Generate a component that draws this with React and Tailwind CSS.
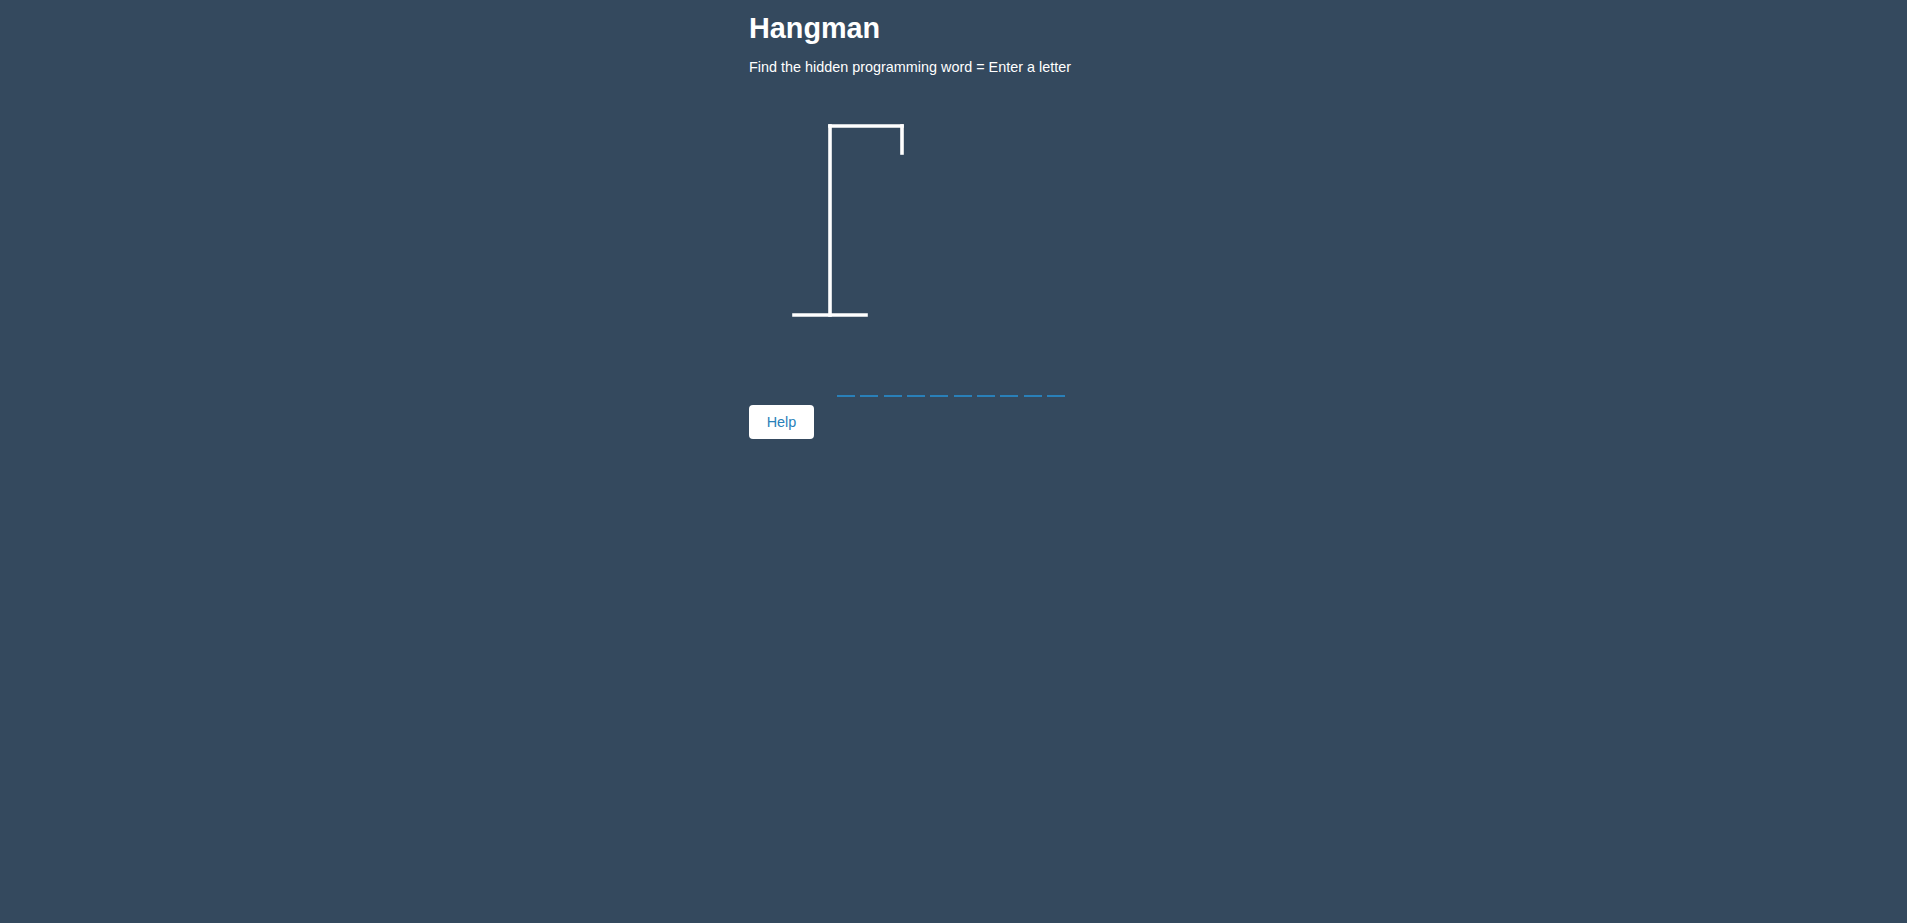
import React from "react";

const word = "javascript";

const App = () => {
  return (
    <div className="min-h-screen w-full overflow-hidden bg-[#34495e] text-white font-['Liberation_Sans',Arial,sans-serif]">
      <div className="flex justify-center">
        <div className="w-[409px] flex flex-col items-start">
          <h1 className="mt-[12px] text-[28.8px] leading-[32px] font-bold">Hangman</h1>
          <p className="mt-[15px] text-[14.4px] leading-[16px]">
            Find the hidden programming word = Enter a letter
          </p>

          {/* Gallows */}
          <svg
            width="180"
            height="225"
            viewBox="0 0 200 250"
            className="mt-[33px] ml-[27px]"
            stroke="#fff"
            strokeWidth="4"
            strokeLinecap="square"
            fill="none"
          >
            <line x1="60" y1="20" x2="140" y2="20" />
            <line x1="140" y1="20" x2="140" y2="50" />
            <line x1="60" y1="20" x2="60" y2="230" />
            <line x1="20" y1="230" x2="100" y2="230" />
          </svg>

          {/* Word */}
          <div className="mt-[19px] w-full flex justify-center pr-[5px]">
            {word.split("").map((ch, i) => (
              <span
                key={i}
                className="mx-[2.7px] w-[18px] h-[45px] border-b-[2.7px] border-[#2980b9] inline-flex items-center justify-center text-[27px]"
              ></span>
            ))}
          </div>

          <button className="mt-[8px] w-[65px] h-[34px] pt-[2px] bg-white rounded-[4px] text-[#2980b9] text-[14.4px] flex items-center justify-center">
            Help
          </button>
        </div>
      </div>
    </div>
  );
};

export default App;
